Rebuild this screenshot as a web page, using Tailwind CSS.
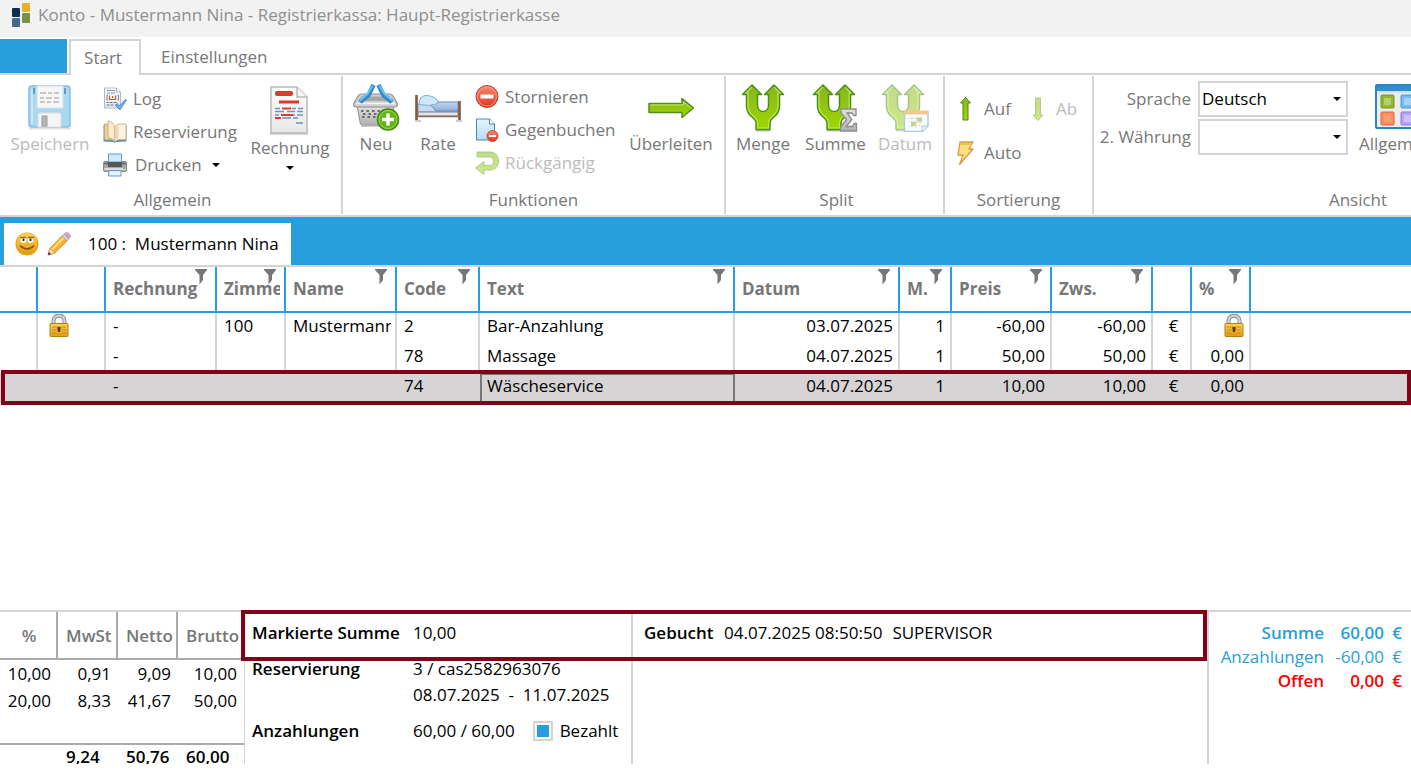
<!DOCTYPE html>
<html lang="de">
<head>
  <meta charset="UTF-8">
  <meta name="viewport" content="width=device-width, initial-scale=1">
  <title>Konto - Mustermann Nina</title>
  <script src="https://cdn.jsdelivr.net/npm/@tailwindcss/browser@4"></script>
</head>
<body class="min-h-screen flex flex-col overflow-x-hidden bg-white text-black font-['Open_Sans','Noto_Sans',sans-serif] text-[17px] leading-6">

  <!-- Shared icon parts -->
  <svg class="absolute size-0" aria-hidden="true">
    <defs>
      <linearGradient id="green" x1="0" y1="0" x2="0" y2="1"><stop offset="0" stop-color="#86b520"/><stop offset="1" stop-color="#9fd800"/></linearGradient>
      <linearGradient id="red" x1="0" y1="0" x2="0" y2="1"><stop offset="0" stop-color="#f58a70"/><stop offset="1" stop-color="#dd3620"/></linearGradient>
      <linearGradient id="gold" x1="0" y1="0" x2="0" y2="1"><stop offset="0" stop-color="#fbd55c"/><stop offset="1" stop-color="#e09a12"/></linearGradient>
      <linearGradient id="paper" x1="0" y1="0" x2="0" y2="1"><stop offset="0" stop-color="#ffffff"/><stop offset="1" stop-color="#e8e8e8"/></linearGradient>
      <linearGradient id="sky" x1="0" y1="0" x2="0" y2="1"><stop offset="0" stop-color="#e4f3fb"/><stop offset="1" stop-color="#b9dcf0"/></linearGradient>
      <linearGradient id="steel" x1="0" y1="0" x2="0" y2="1"><stop offset="0" stop-color="#e2e2e2"/><stop offset="1" stop-color="#b0b0b0"/></linearGradient>
      <linearGradient id="sheet" x1="0" y1="0" x2="0" y2="1"><stop offset="0" stop-color="#c4d8f2"/><stop offset="1" stop-color="#8daedd"/></linearGradient>
    </defs>
    <symbol id="fork" viewBox="0 0 44 48">
      <path d="M15 46.500h14" stroke="#000" stroke-opacity=".25" stroke-width="2"/>
      <path d="M11 1 20.500 10.500h-4V21c0 4 2.500 6.500 5.500 6.500s5.500-2.500 5.500-6.500V10.500h-4L33 1l9.500 9.500h-4V22c0 5-2 8-5 10.500-3 2.500-4.500 3.500-4.500 6.500v6.500H15V39c0-3-1.500-4-4.500-6.500-3-2.500-5-5.500-5-10.500V10.500h-4z" fill="url(#green)" stroke="#4a8f12" stroke-width="1.500" stroke-linejoin="round"/>
      <path d="M11 3 5 9h2v13c0 4.500 2 7 4.500 9.200 3 2.500 5 4 5 7.800v5h11v-5c0-3.800 2-5.300 5-7.800 2.500-2.200 4.500-4.700 4.500-9.200V9h2l-6-6" fill="none" stroke="#c2ec66" stroke-opacity=".8" stroke-width="1.200"/>
    </symbol>
    <symbol id="lock" viewBox="0 0 20 24">
      <path d="M4.500 12V7c0-7 11-7 11 0v5" fill="none" stroke="#8b8b8b" stroke-width="4"/>
      <path d="M4.500 12V7c0-7 11-7 11 0v5" fill="none" stroke="#d5d5d5" stroke-width="2.200"/>
      <rect x="1" y="9.500" width="18" height="13" rx="1" fill="url(#gold)" stroke="#b87a14"/>
      <path d="M3 13h14M3 16h14M3 19h14" stroke="#c98a12"/>
      <rect x="7" y="12" width="6" height="7" fill="#e8ad2c"/>
      <path d="M8.500 13h3v2l-.5 3h-2l-.5-3z" fill="#5d3b08"/>
    </symbol>
    <symbol id="filter" viewBox="0 0 12 16">
      <path d="M0 0h12v1L8 6v5l-3.500 4.500V6L0 1z" fill="#777"/>
    </symbol>
    <symbol id="caret" viewBox="0 0 8 4">
      <path d="M0 0h8L4 4z" fill="#000"/>
    </symbol>
  </svg>

  <!-- Title bar -->
  <header class="flex items-center h-[37px] pb-2 pl-2.5 bg-[#f2f2f2] text-[#8f8f8f]">
    <svg class="w-6 h-7 mr-1" viewBox="0 0 24 28">
      <rect x="2" y="7" width="8" height="9" rx="1" fill="#082f4f"/>
      <rect x="12" y="2" width="8" height="9" rx="1" fill="#e6b02c"/>
      <rect x="2" y="17" width="8" height="9" rx="1" fill="#436a8c"/>
      <rect x="12" y="12" width="8" height="10" rx="1" fill="#7a9048"/>
    </svg>
    <h1>Konto - Mustermann Nina - Registrierkassa: Haupt-Registrierkasse</h1>
  </header>

  <!-- Ribbon tabs -->
  <nav class="flex h-[38px] pt-0.5 border-b-2 border-[#d4d4d4] text-[#777]">
    <button class="w-[67px] h-[34px] bg-[#269fdc]" aria-label="Datei"></button>
    <button class="relative ml-0.5 w-[72px] h-9 -mb-0.5 pr-1 border-2 border-b-0 border-[#d4d4d4] bg-white text-center">Start</button>
    <button class="ml-5 pt-0.5">Einstellungen</button>
  </nav>

  <!-- Ribbon -->
  <div class="flex h-[142px] py-px overflow-hidden border-b-2 border-[#d4d4d4] text-[#777]">
    <section class="flex flex-col shrink-0 w-[343px] border-r-2 border-[#d4d4d4]">
      <div class="flex flex-1 pl-1">
        <button class="flex flex-col items-center w-[92px] pt-2 text-[#bbb]" disabled>
          <svg class="size-12" viewBox="0 0 48 48">
            <path d="M3 44.500h42" stroke="#000" stroke-opacity=".12" stroke-width="2"/>
            <rect x="3" y="2" width="41" height="41" rx="3" fill="#a9d8f2" stroke="#84bfe3" stroke-width="1.500"/>
            <path d="M6 5v35" stroke="#c9e8f8" stroke-width="2"/>
            <path d="M8 4v6M39 4v6" stroke="#5a9cc8" stroke-width="2"/>
            <rect x="11" y="2" width="26" height="22" fill="#f7f7f7" stroke="#d9dfe3"/>
            <path d="M14 9h6m2 0h4m2 0h5M14 14h4m2 0h6m2 0h5M14 18h5m2 0h4m2 0h6" stroke="#b5b8bb" stroke-width="1.500"/>
            <path d="M12 43V31q0-2 2-2h19q2 0 2 2v12z" fill="#f5f5f5" stroke="#dcdcdc"/>
            <rect x="16" y="32" width="5" height="10" fill="#b5b5b5" stroke="#9c9c9c"/>
          </svg>
          Speichern
        </button>
        <div class="flex flex-col items-start w-[148px] pt-1.5 pl-[7px]">
          <button class="flex items-center gap-1.5 h-[33px]">
            <svg class="size-6" viewBox="0 0 24 24">
              <path d="M1.500 1h12l4 4v16h-16z" fill="url(#paper)" stroke="#b3b9be"/>
              <path d="M13.500 1v4h4" fill="#fff" stroke="#a9b0b6"/>
              <path d="M4 3.500h8M4 6h3m1 0h4" stroke="#7f95b0"/>
              <path d="M5 8H4v5h1M14.500 8h1v5h-1" fill="none" stroke="#6e86a5"/>
              <path d="M6.500 8.500v4h6v-4M9.500 9v2" fill="none" stroke="#b5622e" stroke-width="1.200"/>
              <path d="M3.500 15.500h2m1 0h3m1 0h3M3.500 18h3m1 0h3" stroke="#54779f" stroke-width="1.200"/>
              <path d="m12 18 2.500-1.500 2 2.500 5.500-6.500 1.500.5-6.500 10z" fill="#6fb0e4" stroke="#4b8cc8" stroke-width=".8"/>
            </svg>
            Log
          </button>
          <button class="flex items-center gap-1.5 h-[33px]">
            <svg class="size-6" viewBox="0 0 24 24">
              <path d="M.5 5 2 4v16l9-1 11.500 1V5l1 .500v16l-10.500.5-1.500 1-1.500-1-9.500-.500z" fill="#5f91bd"/>
              <path d="M1.500 4h7l3 4v12.500l-4-1h-6z" fill="#ecd0a0" stroke="#c9a46a" stroke-width=".8"/>
              <path d="M5 1q5 .5 7 6v15q-2-4-7-4.500z" fill="#f8ead0" stroke="#c9a46a" stroke-width=".8"/>
              <path d="M12 7q2-3 4-3h7v15.500h-6q-3 0-5 2z" fill="#fdf3e0" stroke="#c9a46a" stroke-width=".8"/>
              <path d="M12.500 8q1.500-2 3-2.500v12.500q-1.500.5-3 2z" fill="#edd7ae"/>
            </svg>
            Reservierung
          </button>
          <button class="flex items-center gap-2 h-[33px]">
            <svg class="size-6" viewBox="0 0 24 24">
              <rect x=".5" y="8.500" width="23" height="10" rx="1.500" fill="#a8a8a8" stroke="#8c8c8c"/>
              <path d="M5.500 9V1h13v8z" fill="#cfe8fa" stroke="#5f9fd0"/>
              <path d="M5 9h14v5H5z" fill="#575757"/>
              <path d="M1 10.500h4M19 10.500h4" stroke="#6e6e6e" stroke-width="2"/>
              <path d="M1.500 16h21" stroke="#dcdcdc" stroke-width="2"/>
              <path d="M20 15.500h2" stroke="#6cc04a"/>
              <path d="M6 17.500h12v5.500H5.500z" fill="#e4f2fb" stroke="#5d9bcb"/>
            </svg>
            Drucken
            <svg class="w-2 h-1 ml-0.5"><use href="#caret"/></svg>
          </button>
        </div>
        <button class="flex flex-col items-center w-[92px] pt-2.5">
          <svg class="w-11 h-[50px]" viewBox="0 0 44 50">
            <path d="M2 47h38v2H2z" fill="#000" opacity=".15"/>
            <path d="M3 1h26l10 10v36H3z" fill="url(#paper)" stroke="#b9b9b9" stroke-width="1.500"/>
            <path d="M29 1v10h10" fill="#f4f4f4" stroke="#b9b9b9" stroke-width="1.500"/>
            <rect x="7" y="5" width="18" height="5" rx="2" fill="#e2382d"/>
            <path d="M11 16h20" stroke="#d8382f" stroke-width="3"/>
            <path d="M7 22.500h5M24 22.500h4m2 0h5M7 25.500h9m3 0h8m2 0h6M7 29h4m10 0h6m2 0h6M14 32h9m2 0h5M28 37h7" stroke="#6f93b9" stroke-width="1.500"/>
            <path d="M14 22.500h9M13 29h12M7 32h6" stroke="#e23a30" stroke-width="1.800"/>
          </svg>
          Rechnung
          <svg class="w-2 h-1 mt-1.5"><use href="#caret"/></svg>
        </button>
      </div>
      <h2 class="pb-0.5 pl-1 text-center">Allgemein</h2>
    </section>

    <section class="flex flex-col shrink-0 w-[383px] border-r-2 border-[#d4d4d4]">
      <div class="flex flex-1">
        <button class="flex flex-col items-center w-[66px] pt-2">
          <svg class="size-12" viewBox="0 0 48 48">
            <path d="M9 42h26" stroke="#000" stroke-opacity=".2" stroke-width="2"/>
            <path d="M5 21h37l-3 17q-.5 3-3 3H11q-2.500 0-3-3z" fill="url(#steel)" stroke="#9a9a9a" stroke-width="1.200"/>
            <path d="M9 10h29q1.500 0 2.500 1.500L45 19q1 4-2 4H4q-3 0-2-4l4.500-7.500Q7.500 10 9 10z" fill="#cfcfcf" stroke="#8f8f8f" stroke-width="1.200"/>
            <path d="M9.500 12.500h28l3 4.500h-34z" fill="#a5a5a5"/>
            <path d="M4 19.500h39" stroke="#f4f4f4" stroke-width="1.500"/>
            <path d="M9 27h30M11 30h28M10 33h28" stroke="#6f6f6f" stroke-width="1.800" stroke-dasharray="2.500 3"/>
            <path d="M21.500 1 16.500 11 8 18M26.500 1 31.500 11 40 18" fill="none" stroke="#2b8ad0" stroke-width="4.500"/>
            <path d="M20.500 2 15.500 10 8 16.500M27.500 2 32.500 10l7.500 6.500" fill="none" stroke="#74c5f5" stroke-width="1.800"/>
            <circle cx="36" cy="35.500" r="10.500" fill="#62b512" stroke="#418a10" stroke-width="1.500"/>
            <circle cx="36" cy="35.500" r="9" fill="none" stroke="#a0da5c"/>
            <path d="M36 29.500v12M30 35.500h12" stroke="#fff" stroke-width="3.500"/>
          </svg>
          Neu
        </button>
        <button class="flex flex-col items-center w-[58px] pt-2">
          <svg class="size-12" viewBox="0 0 48 48">
            <path d="M1 37h6M42 37h6" stroke="#000" stroke-opacity=".2" stroke-width="2"/>
            <path d="M4 20h11l29 4v4H4z" fill="#c9daf2" stroke="#7d9ccb"/>
            <path d="M14 18h30v9H22z" fill="url(#sheet)" stroke="#6585ba"/>
            <path d="M4 28h40v4H4z" fill="#dfe5ee" stroke="#8a7f86"/>
            <path d="M5 20.500q0-9.500 8-9 11 1 11 8-9 3.500-19 1z" fill="#cfe8f7" stroke="#7eadcf"/>
            <path d="M2.500 11v25M45.500 17v19" stroke="#81583f" stroke-width="2.600"/>
            <path d="M4 32.500h40" stroke="#8a6853" stroke-width="1.500"/>
          </svg>
          Rate
        </button>
        <div class="flex flex-col items-start w-[155px] pt-1 pl-2">
          <button class="flex items-center gap-1.5 h-[33px]">
            <svg class="size-6" viewBox="0 0 24 24">
              <circle cx="12" cy="11.500" r="11" fill="url(#red)" stroke="#c93a28"/>
              <circle cx="12" cy="11.500" r="9.500" fill="none" stroke="#f5a896" stroke-width=".8"/>
              <path d="M5.500 11.500h13" stroke="#fff" stroke-width="4"/>
            </svg>
            Stornieren
          </button>
          <button class="flex items-center gap-1.5 h-[33px]">
            <svg class="size-6" viewBox="0 0 24 24">
              <path d="M1.500 1h13l5 5v16h-18z" fill="url(#sky)" stroke="#4a87a8"/>
              <path d="M14.500 1v5h5" fill="#fff" stroke="#4a87a8"/>
              <circle cx="17.500" cy="18" r="5.500" fill="url(#red)" stroke="#c93a28" stroke-width=".8"/>
              <path d="M14 18h7" stroke="#fff" stroke-width="2"/>
            </svg>
            Gegenbuchen
          </button>
          <button class="flex items-center gap-1.5 h-[33px] text-[#bbb]" disabled>
            <svg class="size-6 opacity-50" viewBox="0 0 24 24">
              <path d="M2 1h13c5 0 8.500 3.500 8.500 9S20 19 15 19H9v4.500L.5 17 9 10.500v4h5.500c2.500 0 4-1.500 4-4.500s-1.500-4-4-4H2z" fill="url(#green)" stroke="#5a9c1d"/>
            </svg>
            Rückgängig
          </button>
        </div>
        <button class="flex flex-col items-center w-[98px] pt-2">
          <svg class="size-12" viewBox="0 0 48 48">
            <path d="M2 19.500h33v-5L46.500 24 35 33.500v-5H2z" fill="url(#green)" stroke="#559016" stroke-width="1.500" stroke-linejoin="round"/>
            <path d="M3.500 21h33v-3l7 6" fill="none" stroke="#c9e57f"/>
          </svg>
          Überleiten
        </button>
      </div>
      <h2 class="pb-0.5 text-center">Funktionen</h2>
    </section>

    <section class="flex flex-col shrink-0 w-[219px] border-r-2 border-[#d4d4d4]">
      <div class="flex flex-1">
        <button class="flex flex-col items-center w-[74px] pt-2">
          <svg class="w-11 h-12"><use href="#fork"/></svg>
          Menge
        </button>
        <button class="flex flex-col items-center w-[71px] pt-2">
          <svg class="w-12 h-12" viewBox="0 0 48 48">
            <svg width="44" height="48"><use href="#fork"/></svg>
            <path d="M29 25h15v6.500h-2.500L40 29h-5l5 6.500-6 7h6.500l1.500-3h2.500V47H28.500v-4l6-7.500-5.500-6.500z" fill="url(#steel)" stroke="#8c8c8c" stroke-width="1.300"/>
          </svg>
          Summe
        </button>
        <button class="flex flex-col items-center w-[68px] pt-2 text-[#bbb]" disabled>
          <svg class="w-12 h-12 opacity-50" viewBox="0 0 48 48">
            <svg width="44" height="48"><use href="#fork"/></svg>
            <path d="M23.500 28H47v14l-5.500 5.500h-18z" fill="#fff" stroke="#4f9ad8" stroke-width="1.500"/>
            <path d="M23 28.500h24.500" stroke="#f08a30" stroke-width="4"/>
            <path d="M27 34.500h15M27 38h15M27 42h12M31 32.500v12M35 32.500v12M39 32.500v10" stroke="#a9b4bf" stroke-width=".8"/>
            <path d="M36 33.500h5v4h-5zM30 38h5v4h-5z" fill="#7bb01f"/>
            <path d="M41 47.500V42h6" fill="#dceaf5" stroke="#4f8ec2"/>
          </svg>
          Datum
        </button>
      </div>
      <h2 class="pb-0.5 pl-1 text-center">Split</h2>
    </section>

    <section class="flex flex-col shrink-0 w-[149px] border-r-2 border-[#d4d4d4]">
      <div class="flex-1 grid grid-cols-[73px_1fr] auto-rows-[44px] content-start pt-[11px] pl-2">
        <button class="flex items-center gap-[7px]">
          <svg class="size-6" viewBox="0 0 24 24">
            <path d="M12.500.5 17.500 6H15v17h-5V6H7.500z" fill="url(#green)" stroke="#4a8a12" stroke-linejoin="round"/>
          </svg>
          Auf
        </button>
        <button class="flex items-center gap-1.5 text-[#bbb]" disabled>
          <svg class="size-6 opacity-50" viewBox="0 0 24 24">
            <path d="M12 23.500 17 18h-2.500V1h-5v17H7z" fill="url(#green)" stroke="#5a9c1d" stroke-linejoin="round"/>
          </svg>
          Ab
        </button>
        <button class="flex items-center gap-[7px]">
          <svg class="size-6" viewBox="0 0 24 24">
            <path d="M7 1h13l-4 7h4L6.500 23.500l3.500-9.500H5z" fill="#fbdf83" stroke="#d59a45" stroke-width="1.300" stroke-linejoin="round"/>
            <path d="M8 3h9" stroke="#f3c53d" stroke-width="2"/>
          </svg>
          Auto
        </button>
      </div>
      <h2 class="pb-0.5 text-center">Sortierung</h2>
    </section>

    <section class="flex flex-col shrink-0 w-[528px]">
      <div class="flex flex-1">
        <div class="grid grid-cols-[97px_150px] auto-rows-[36px] content-start items-center gap-x-[7px] gap-y-0.5 pt-[5px]">
          <label for="sprache" class="text-right">Sprache</label>
          <div class="relative">
            <select id="sprache" class="appearance-none block w-full h-9 pl-0.5 border-2 border-[#d4d4d4] bg-white text-black">
              <option>Deutsch</option>
            </select>
            <svg class="absolute right-[7px] top-4 w-2 h-1 pointer-events-none"><use href="#caret"/></svg>
          </div>
          <label for="waehrung" class="text-right">2. Währung</label>
          <div class="relative">
            <select id="waehrung" class="appearance-none block w-full h-9 pl-0.5 border-2 border-[#d4d4d4] bg-white text-black">
              <option></option>
            </select>
            <svg class="absolute right-[7px] top-4 w-2 h-1 pointer-events-none"><use href="#caret"/></svg>
          </div>
        </div>
        <button class="flex flex-col items-center w-[100px] pt-2">
          <svg class="size-12" viewBox="0 0 48 48">
            <rect x="2" y="1" width="46" height="43" rx="1" fill="#ececec" stroke="#2a86c0" stroke-width="2"/>
            <path d="M3 4.500h44" stroke="#2f8fcd" stroke-width="5"/>
            <path d="M4 8h42" stroke="#a9d5ee"/>
            <rect x="7" y="11" width="13" height="13" rx="1" fill="#93b52f" stroke="#739a1c"/>
            <rect x="10" y="14" width="7" height="7" fill="#b3cf67"/>
            <rect x="27" y="11" width="13" height="13" rx="1" fill="#78baf0" stroke="#4f97d8"/>
            <rect x="30" y="14" width="7" height="7" fill="#a3d3f8"/>
            <rect x="7" y="28" width="13" height="13" rx="1" fill="#fb8a66" stroke="#e0643c"/>
            <rect x="10" y="31" width="7" height="7" fill="#eda16f"/>
            <rect x="27" y="28" width="13" height="13" rx="1" fill="#b7a3f7" stroke="#8f76e0"/>
            <rect x="30" y="31" width="7" height="7" fill="#cfc1fb"/>
          </svg>
          Allgemein
        </button>
      </div>
      <h2 class="pb-0.5 text-center">Ansicht</h2>
    </section>
  </div>

  <!-- Account tabs -->
  <div class="flex items-end h-[50px] pl-1 bg-[#269fdc] border-b-2 border-[#d4d4d4]">
    <button class="flex items-center h-[42px] pl-[11px] pr-3 bg-white whitespace-pre">
      <svg class="size-6" viewBox="0 0 24 24">
        <circle cx="12" cy="12" r="11.500" fill="#e3a617"/>
        <circle cx="12" cy="11.500" r="10.500" fill="url(#gold)"/>
        <ellipse cx="8.500" cy="8" rx="2.800" ry="3" fill="#fff"/>
        <ellipse cx="15.500" cy="8" rx="2.800" ry="3" fill="#fff"/>
        <path d="M5 5.500h6M13 5.500h6" stroke="#a46a0a" stroke-width="1.300"/>
        <path d="M8.500 6.500v2.500M15.500 6.500v2.500" stroke="#222" stroke-width="1.800"/>
        <path d="M5 13.500q7 7 14 0" fill="none" stroke="#8a5206" stroke-width="1.500"/>
      </svg>
      <svg class="size-6 ml-2" viewBox="0 0 24 24">
        <path d="m1 23 2-7L16 3l5 5L8 21z" fill="#fbad2f" stroke="#e0912a" stroke-width=".8"/>
        <path d="M5 17.500 17.500 5" stroke="#ffdf8a" stroke-width="2"/>
        <path d="m1 23 2-7 5 5z" fill="#f3dcb4" stroke="#c9a065" stroke-width=".8"/>
        <path d="m1 23 .8-3 2.200 2.200z" fill="#2d2d2d"/>
        <path d="m15 4 2-2 5 5-2 2z" fill="#c9d0d6" stroke="#9aa3ab" stroke-width=".8"/>
        <path d="m17.500 1.500 2-1q1.500 0 3 1.500t1 3l-1.500 1.500z" fill="#dd9bcd" stroke="#c98bbb" stroke-width=".8"/>
      </svg>
      <span class="ml-[17px]">100 :  Mustermann Nina</span>
    </button>
  </div>

  <!-- Bookings -->
  <main class="flex-1">
    <div class="relative">
      <table class="w-full table-fixed border-separate border-spacing-0">
        <colgroup>
          <col class="w-[38px]"><col class="w-[68px]"><col class="w-[111px]"><col class="w-[69px]"><col class="w-[111px]"><col class="w-[83px]"><col class="w-[255px]"><col class="w-[165px]"><col class="w-[52px]"><col class="w-[100px]"><col class="w-[101px]"><col class="w-[39px]"><col class="w-[59px]"><col>
        </colgroup>
        <thead class="text-[#777] text-left">
          <tr id="head" class="h-[46px]"></tr>
        </thead>
        <tbody id="rows"></tbody>
      </table>
      <div class="absolute left-px right-0 -bottom-0.5 h-[35px] border-4 border-[#840018] pointer-events-none"></div>
    </div>
  </main>

  <!-- Totals and details -->
  <footer class="flex h-[154px] mb-3.5">
    <div class="shrink-0 w-[244px] overflow-hidden border-t-2 border-[#d4d4d4]">
      <table class="w-full table-fixed border-separate border-spacing-0 text-right">
        <colgroup><col class="w-[58px]"><col class="w-[60px]"><col class="w-[60px]"><col></colgroup>
        <thead class="text-[#777]">
          <tr class="h-12">
            <th class="p-0 pt-0.5 pl-0.5 border-b-2 border-r-2 border-[#aaa] text-center font-semibold">%</th>
            <th class="p-0 pt-0.5 pl-2 border-b-2 border-r-2 border-[#aaa] text-left font-semibold">MwSt</th>
            <th class="p-0 pt-0.5 pl-2 border-b-2 border-r-2 border-[#aaa] text-left font-semibold">Netto</th>
            <th class="p-0 pt-0.5 pl-2 border-b-2 border-[#aaa] text-left font-semibold">Brutto</th>
          </tr>
        </thead>
        <tbody>
          <tr class="h-[27px]"><td class="p-0 pr-[7px]">10,00</td><td class="p-0 pr-[7px]">0,91</td><td class="p-0 pr-[7px]">9,09</td><td class="p-0 pr-[7px]">10,00</td></tr>
          <tr class="h-[27px]"><td class="p-0 pr-[7px]">20,00</td><td class="p-0 pr-[7px]">8,33</td><td class="p-0 pr-[7px]">41,67</td><td class="p-0 pr-[7px]">50,00</td></tr>
          <tr class="h-[29px]"><td colspan="4"></td></tr>
        </tbody>
        <tfoot class="text-left font-semibold">
          <tr>
            <td class="p-0 border-t-2 border-[#aaa]"></td>
            <td class="p-0 pl-2 border-t-2 border-[#aaa]">9,24</td>
            <td class="p-0 pl-2 border-t-2 border-[#aaa]">50,76</td>
            <td class="p-0 pl-2 border-t-2 border-[#aaa]">60,00</td>
          </tr>
        </tfoot>
      </table>
    </div>

    <div class="relative flex flex-1 border-l border-[#d4d4d4]">
      <dl class="grid grid-cols-[161px_1fr] content-start w-[388px] shrink-0 pt-[11px] pl-[7px] border-r-2 border-[#d4d4d4]">
        <dt class="h-9 font-semibold">Markierte Summe</dt>
        <dd>10,00</dd>
        <dt class="h-[26px] font-semibold">Reservierung</dt>
        <dd>3 / cas2582963076</dd>
        <dd class="col-start-2 h-9 whitespace-pre">08.07.2025  -  11.07.2025</dd>
        <dt class="font-semibold">Anzahlungen</dt>
        <dd class="flex items-center gap-[18px]">
          60,00 / 60,00
          <label class="flex items-center gap-[7px]">
            <input type="checkbox" checked class="appearance-none size-5 border-2 border-[#d4d4d4] bg-white checked:bg-[#269fdc] checked:shadow-[inset_0_0_0_2px_white]">
            Bezahlt
          </label>
        </dd>
      </dl>
      <dl class="flex flex-1 items-start pt-[11px] pl-[11px]">
        <dt class="w-20 font-semibold">Gebucht</dt>
        <dd class="mr-2.5">04.07.2025 08:50:50</dd>
        <dd>SUPERVISOR</dd>
      </dl>
      <div class="absolute -left-1 right-0 top-0 h-[51px] border-4 border-[#840018] pointer-events-none"></div>
    </div>

    <dl class="grid grid-cols-[115px_60px_18px] content-start w-[204px] shrink-0 pt-[9px] border-l-2 border-t-2 border-[#d4d4d4] text-right text-[#269fdc]">
      <dt class="font-semibold">Summe</dt><dd class="font-semibold">60,00</dd><dd class="font-semibold">€</dd>
      <dt>Anzahlungen</dt><dd>-60,00</dd><dd>€</dd>
      <dt class="font-semibold text-[#f00]">Offen</dt><dd class="font-semibold text-[#f00]">0,00</dd><dd class="font-semibold text-[#f00]">€</dd>
    </dl>
  </footer>

  <script>
    const columns = ['', '', 'Rechnung', 'Zimmer', 'Name', 'Code', 'Text', 'Datum', 'M.', 'Preis', 'Zws.', '', '%'];
    const bookings = [
      ['', 'lock', '-', '100', 'Mustermann', '2', 'Bar-Anzahlung', '03.07.2025', '1', '-60,00', '-60,00', '€', 'lock'],
      ['', '', '-', '', '', '78', 'Massage', '04.07.2025', '1', '50,00', '50,00', '€', '0,00'],
      ['', '', '-', '', '', '74', 'Wäscheservice', '04.07.2025', '1', '10,00', '10,00', '€', '0,00'],
    ];
    const selected = 2;

    document.getElementById('head').innerHTML = columns.map(name => `
      <th class="relative p-0 pl-[7px] pr-1 border-r-2 border-b-2 border-[#269fdc] whitespace-nowrap">
        <div class="overflow-hidden">${name}</div>
        ${name ? '<svg class="absolute right-2 top-0.5 w-3 h-4"><use href="#filter"/></svg>' : ''}
      </th>`).join('') + '<th class="border-b-2 border-[#269fdc]"></th>';

    document.getElementById('rows').innerHTML = bookings.map((row, r) => {
      const isSelected = r === selected;
      const cells = row.map((value, c) => {
        const align = c >= 7 && c !== 11 ? 'text-right pl-1 pr-[5px]' : c === 11 ? 'text-center pl-1' : 'pl-[7px] pr-1';
        const line = isSelected
          ? 'border-r-2 border-transparent ' + (c === 6 ? 'outline-2 -outline-offset-2 outline-[#777]' : '')
          : 'border-r-2 border-[#d4d4d4]';
        const content = value === 'lock'
          ? `<svg class="w-5 h-6 ${c === 1 ? 'ml-1' : 'ml-auto'}"><use href="#lock"/></svg>`
          : value;
        return `<td class="py-0 pb-1 ${align} ${line}"><div class="overflow-hidden whitespace-nowrap">${content}</div></td>`;
      }).join('');
      return `<tr class="h-[30px] ${isSelected ? 'bg-[#d6d4d5]' : ''}">${cells}<td></td></tr>`;
    }).join('');
  </script>
</body>
</html>
